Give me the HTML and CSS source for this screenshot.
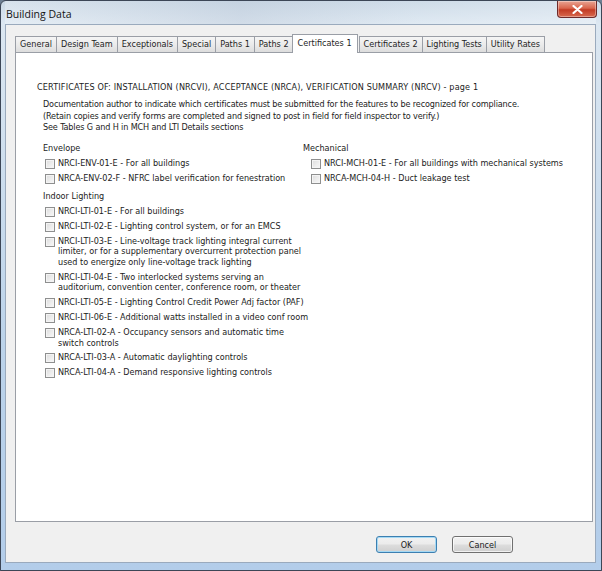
FILE: index.html
```html
<!DOCTYPE html>
<html lang="en">
<head>
  <meta charset="UTF-8" />
  <title>Building Data</title>
  <link rel="stylesheet" href="styles.css">
</head>
<body>

  <div class="window">
    <!-- Title bar -->
    <div class="titlebar">
      <span class="title">Building Data</span>
      <span class="close-btn">
        <svg width="11" height="9" viewBox="0 0 11 9">
          <path d="M1.5 1 L9.5 8 M9.5 1 L1.5 8" stroke="#fff" stroke-width="2.2" stroke-linecap="round"/>
        </svg>
      </span>
    </div>

    <div class="client">
      <!-- Tabs -->
      <div class="tabs">
        <span class="tab">General</span>
        <span class="tab">Design Team</span>
        <span class="tab">Exceptionals</span>
        <span class="tab">Special</span>
        <span class="tab">Paths 1</span>
        <span class="tab">Paths 2</span>
        <span class="tab active">Certificates 1</span>
        <span class="tab">Certificates 2</span>
        <span class="tab">Lighting Tests</span>
        <span class="tab">Utility Rates</span>
      </div>

      <div class="panel">
        <p class="heading">CERTIFICATES OF: INSTALLATION (NRCVI), ACCEPTANCE (NRCA), VERIFICATION SUMMARY (NRCV) - page 1</p>
        <p class="notes">
          Documentation author to indicate which certificates must be submitted for the features to be recognized for compliance.<br>
          (Retain copies and verify forms are completed and signed to post in field for field inspector to verify.)<br>
          See Tables G and H in MCH and LTI Details sections
        </p>

        <div class="columns">
          <div class="col col-left">
            <div class="group-label">Envelope</div>
            <label class="check"><span class="box"></span><span>NRCI-ENV-01-E - For all buildings</span></label>
            <label class="check"><span class="box"></span><span>NRCA-ENV-02-F - NFRC label verification for fenestration</span></label>

            <div class="group-label spaced">Indoor Lighting</div>
            <label class="check"><span class="box"></span><span>NRCI-LTI-01-E - For all buildings</span></label>
            <label class="check"><span class="box"></span><span>NRCI-LTI-02-E - Lighting control system, or for an EMCS</span></label>
            <label class="check"><span class="box"></span><span>NRCI-LTI-03-E - Line-voltage track lighting integral current<br>limiter, or for a supplementary overcurrent protection panel<br>used to energize only line-voltage track lighting</span></label>
            <label class="check"><span class="box"></span><span>NRCI-LTI-04-E - Two interlocked systems serving an<br>auditorium, convention center, conference room, or theater</span></label>
            <label class="check"><span class="box"></span><span>NRCI-LTI-05-E - Lighting Control Credit Power Adj factor (PAF)</span></label>
            <label class="check"><span class="box"></span><span>NRCI-LTI-06-E - Additional watts installed in a video conf room</span></label>
            <label class="check"><span class="box"></span><span>NRCA-LTI-02-A - Occupancy sensors and automatic time<br>switch controls</span></label>
            <label class="check"><span class="box"></span><span>NRCA-LTI-03-A - Automatic daylighting controls</span></label>
            <label class="check"><span class="box"></span><span>NRCA-LTI-04-A - Demand responsive lighting controls</span></label>
          </div>

          <div class="col col-right">
            <div class="group-label">Mechanical</div>
            <label class="check"><span class="box"></span><span>NRCI-MCH-01-E - For all buildings with mechanical systems</span></label>
            <label class="check"><span class="box"></span><span>NRCA-MCH-04-H - Duct leakage test</span></label>
          </div>
        </div>
      </div>

      <!-- Dialog buttons -->
      <div class="buttons">
        <button class="btn btn-default">OK</button>
        <button class="btn">Cancel</button>
      </div>
    </div>
  </div>

</body>
</html>
```

FILE: styles.css
```css
body {
  margin: 0;
  font-family: "DejaVu Sans Condensed", "DejaVu Sans", sans-serif;
  font-size: 9px;
  color: #1b1b1b;
  background: #6d7f93;
}

/* Aero window frame */
.window {
  width: 602px;
  height: 571px;
  box-sizing: border-box;
  display: flex;
  flex-direction: column;
  border: 1px solid #3c4656;
  border-radius: 6px 6px 0 0;
  padding: 0 5px 7px 4px;
  background: linear-gradient(180deg, #c9d8e6 0%, #dce7f1 4%, #bcd3ea 60%, #b3cdea 100%);
}

.titlebar {
  height: 23px;
  display: flex;
  align-items: flex-start;
  justify-content: space-between;
  background: linear-gradient(90deg, rgba(255,255,255,0.25), rgba(190,200,215,0.35) 40%, rgba(255,255,255,0.1) 70%, rgba(255,255,255,0.3));
}

.title {
  font-family: "Open Sans", "Noto Sans", sans-serif;
  font-size: 10.5px;
  color: #141414;
  margin: 6px 0 0 1px;
}

.close-btn {
  width: 38px;
  height: 16px;
  margin-right: -1px;
  display: flex;
  align-items: center;
  justify-content: center;
  border: 1px solid #6d2a2a;
  border-top: none;
  border-radius: 0 0 4px 4px;
  background: linear-gradient(180deg, #e8a493 0%, #d9664d 45%, #c23b24 55%, #d86a4f 100%);
  box-shadow: inset 0 0 0 1px rgba(255,255,255,0.35);
}

/* Client area */
.client {
  flex: 1;
  display: flex;
  flex-direction: column;
  background: #f0f0f0;
  border: 1px solid #9aaabd;
  padding: 10px 2px 0 9px;
}

.tabs {
  display: flex;
  align-items: flex-end;
  height: 17px;
  position: relative;
  z-index: 1;
}

.tab {
  height: 15px;
  line-height: 15px;
  padding: 0 4px;
  border: 1px solid #9a9ea6;
  border-bottom: none;
  margin-right: -1px;
  background: linear-gradient(180deg, #f5f5f5 0%, #ebebeb 50%, #dddddd 100%);
  color: #1e1e1e;
}

.tab.active {
  height: 18px;
  line-height: 17px;
  margin: 0 1px -1px -1px;
  padding: 0 5px;
  background: #fff;
}

.panel {
  height: 470px;
  box-sizing: border-box;
  background: #fff;
  border: 1px solid #9a9ea6;
  padding: 29px 10px 0 21px;
}

.heading {
  margin: 0;
  line-height: 11px;
  letter-spacing: 0.16px;
}

.notes {
  margin: 6px 0 0 6px;
  line-height: 11.5px;
  letter-spacing: -0.13px;
}

.columns {
  display: flex;
  margin-top: 9px;
}

.col-left {
  width: 260px;
  padding-left: 6px;
}

.group-label {
  line-height: 11px;
  margin-bottom: 4px;
}

.group-label.spaced {
  margin-top: 7px;
}

.check {
  display: flex;
  align-items: flex-start;
  line-height: 10.7px;
  margin: 0 0 4px 2px;
  white-space: nowrap;
}

.col-right .check {
  margin-left: 8px;
}

.box {
  flex: none;
  width: 8px;
  height: 8px;
  margin: 1px 3px 0 0;
  border: 1px solid #8e8f8f;
  background: linear-gradient(135deg, #dcdcdc 0%, #eeeeee 60%, #f7f7f7 100%);
  box-shadow: inset 0 0 0 1px #f4f4f4;
}

/* Bottom buttons */
.buttons {
  display: flex;
  justify-content: flex-end;
  gap: 15px;
  padding: 14px 80px 0 0;
}

.btn {
  width: 61px;
  height: 17px;
  padding: 0;
  font-family: inherit;
  font-size: 9px;
  color: #1b1b1b;
  border: 1px solid #707070;
  border-radius: 3px;
  background: linear-gradient(180deg, #f2f2f2 0%, #ebebeb 48%, #dddddd 52%, #cfcfcf 100%);
  box-shadow: inset 0 0 0 1px rgba(255,255,255,0.7);
}

.btn-default {
  border-color: #3c7fb1;
  box-shadow: inset 0 0 0 1px #a5d9f4;
}
```
